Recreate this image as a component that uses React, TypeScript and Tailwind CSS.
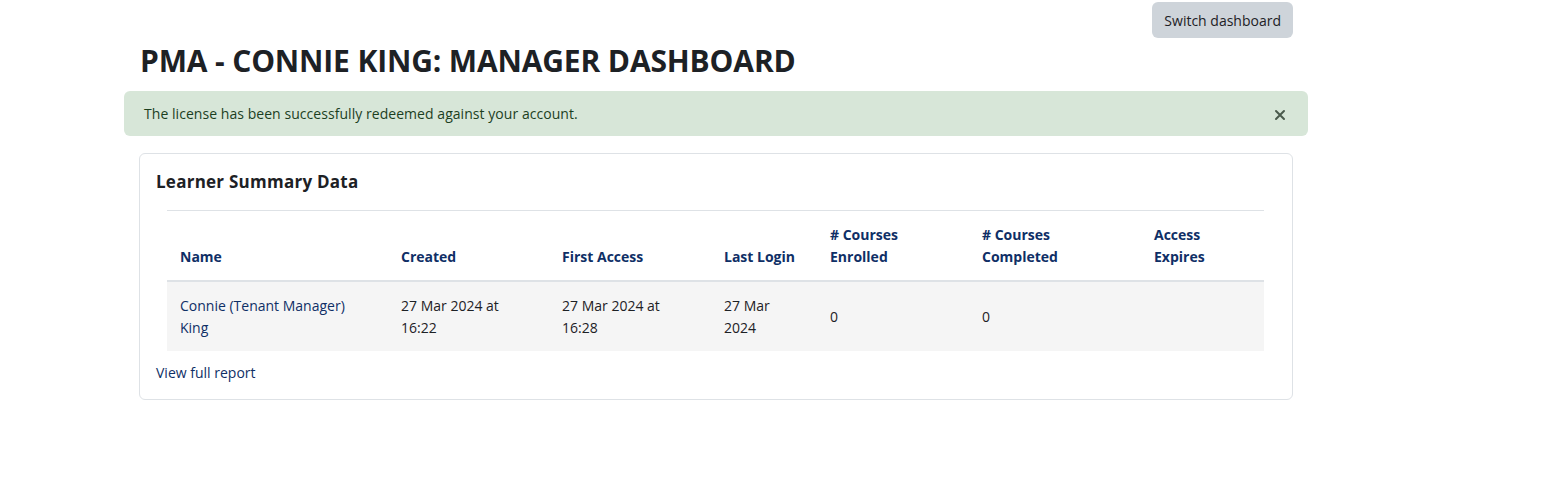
import React from "react";

const cols = [
  { label: ["Name"], w: "w-[221px]" },
  { label: ["Created"], w: "w-[161px]" },
  { label: ["First Access"], w: "w-[162px]" },
  { label: ["Last Login"], w: "w-[106px]" },
  { label: ["# Courses", "Enrolled"], w: "w-[152px]" },
  { label: ["# Courses", "Completed"], w: "w-[172px]" },
  { label: ["Access", "Expires"], w: "w-[123px]" },
];

export default function App() {
  return (
    <div className="w-[1568px] h-[490px] bg-white text-[#1d2125]" style={{ fontFamily: '"Open Sans", "Noto Sans", sans-serif' }}>
      <div className="ml-[139px] w-[1154px] flex flex-col">
        <div className="flex justify-end pt-[2px]">
          <button className="h-[36px] px-[12px] rounded-[6px] bg-[#ced4da] text-[14px] text-[#1d2125]">
            Switch dashboard
          </button>
        </div>
        <h1 className="mt-[6px] ml-[1px] text-[30px] leading-[34px] font-bold tracking-[-0.15px] text-[#1d2125]">
          PMA - CONNIE KING: MANAGER DASHBOARD
        </h1>
        <div className="mt-[13px] -mx-[15px] h-[45px] rounded-[6px] bg-[#d7e6d8] flex items-center justify-between pl-[20px] pr-[22px]">
          <span className="text-[14px] text-[#1c3f1f] tracking-[0.05px]">The license has been successfully redeemed against your account.</span>
          <svg width="12" height="12" viewBox="0 0 12 12" className="mt-[3px]">
            <path d="M2 2 L10 10 M10 2 L2 10" stroke="#4a5a4c" strokeWidth="2" strokeLinecap="round" />
          </svg>
        </div>
        <div className="mt-[17px] h-[247px] border border-[#dee2e6] rounded-[6px] px-[16px] pt-[16px]">
          <h2 className="text-[17px] leading-[24px] font-bold tracking-[0.25px] text-[#1d2125]">Learner Summary Data</h2>
          <table className="ml-[11px] mt-[16px] w-[1097px] border-collapse text-[14px] leading-[22px]">
            <thead>
              <tr className="border-t border-[#dee2e6] border-b-2 border-b-[#dee2e6]">
                {cols.map((c, i) => (
                  <th key={i} className={`${c.w} text-left align-bottom font-bold text-[#0f2f66] px-[13px] pt-[13px] pb-[12px]`}>
                    {c.label.map((l, j) => (
                      <div key={j}>{l}</div>
                    ))}
                  </th>
                ))}
              </tr>
            </thead>
            <tbody>
              <tr className="bg-[#f5f5f5]">
                <td className="px-[13px] pt-[13px] pb-[12px] align-middle text-[#0f2f66]">
                  <div>Connie (Tenant Manager)</div>
                  <div>King</div>
                </td>
                <td className="px-[13px] pt-[13px] pb-[12px] align-middle">
                  <div>27 Mar 2024 at</div>
                  <div>16:22</div>
                </td>
                <td className="px-[13px] pt-[13px] pb-[12px] align-middle">
                  <div>27 Mar 2024 at</div>
                  <div>16:28</div>
                </td>
                <td className="px-[13px] pt-[13px] pb-[12px] align-middle">
                  <div>27 Mar</div>
                  <div>2024</div>
                </td>
                <td className="px-[13px] pt-[13px] pb-[12px] align-middle">0</td>
                <td className="px-[13px] pt-[13px] pb-[12px] align-middle">0</td>
                <td className="px-[13px] pt-[13px] pb-[12px] align-middle"></td>
              </tr>
            </tbody>
          </table>
          <div className="mt-[11px] text-[14px] leading-[22px] text-[#0f2f66]">View full report</div>
        </div>
      </div>
    </div>
  );
}
